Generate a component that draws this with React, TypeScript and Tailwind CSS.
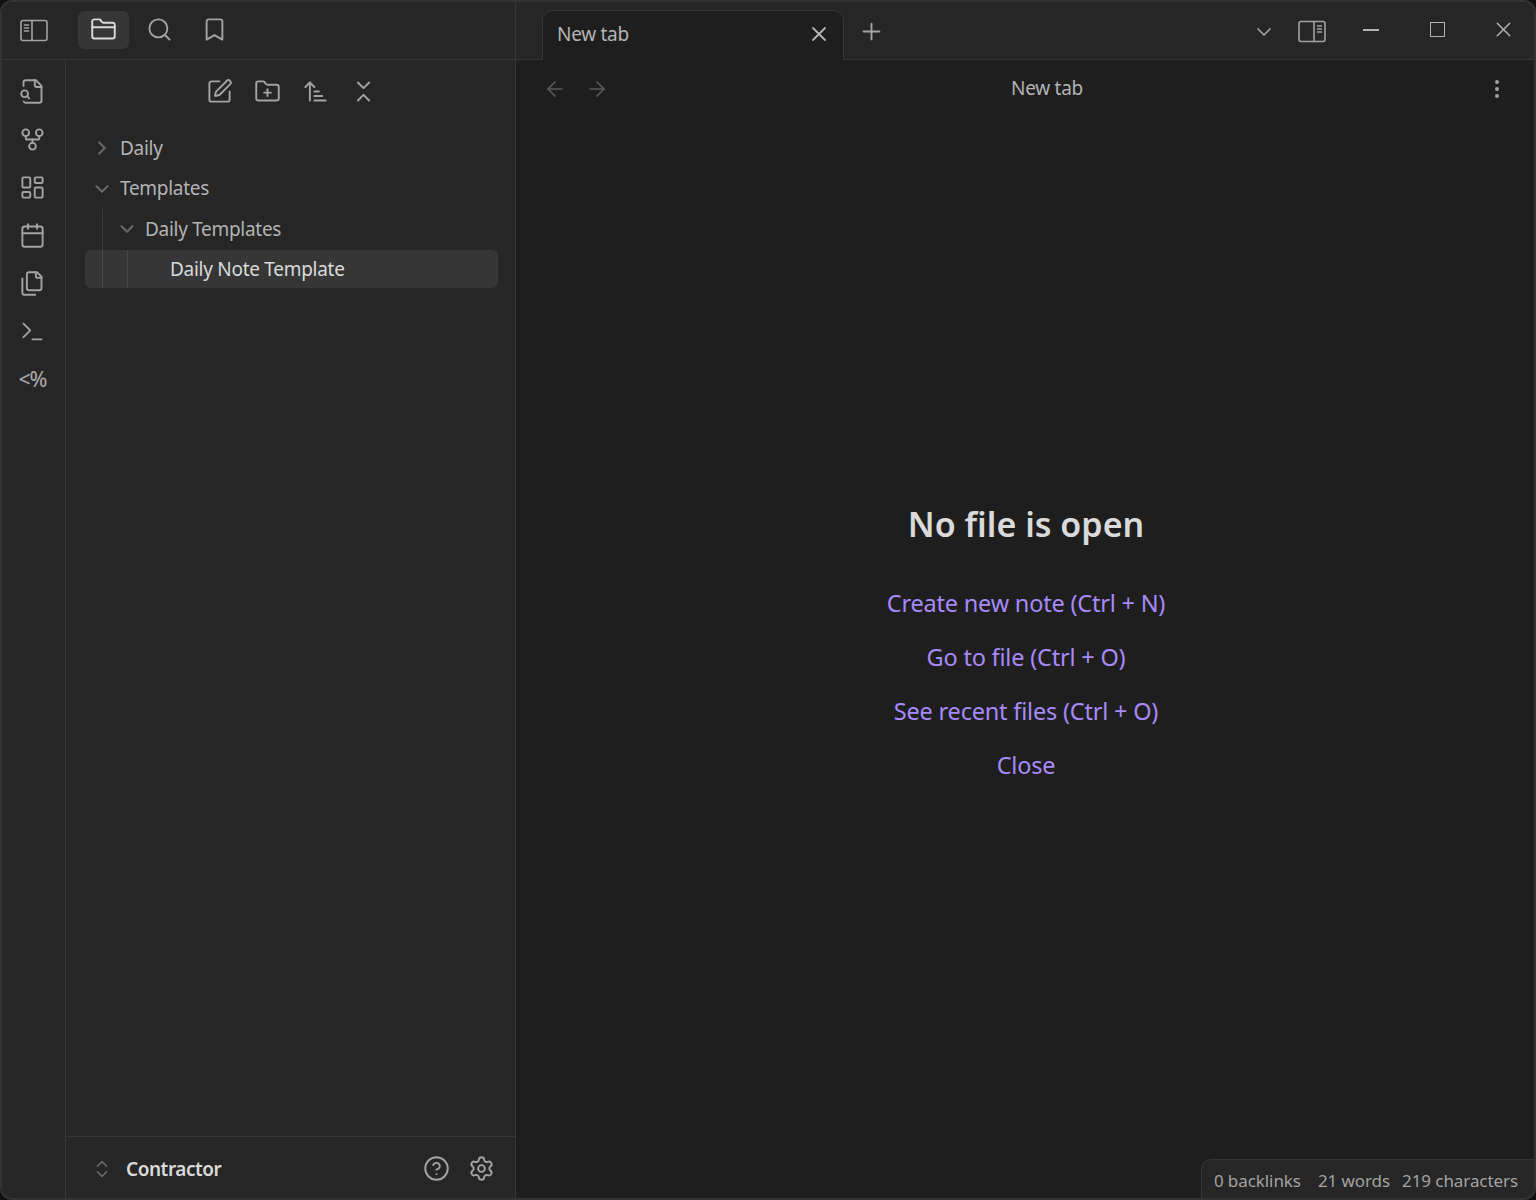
import {
	ArrowLeft,
	ArrowRight,
	ArrowUpNarrowWide,
	Bookmark,
	Calendar,
	ChevronDown,
	ChevronRight,
	ChevronsDownUp,
	ChevronsUpDown,
	CircleHelp,
	EllipsisVertical,
	FolderClosed,
	FolderPlus,
	GitFork,
	LayoutDashboard,
	Plus,
	Search,
	Settings,
	SquarePen,
	Terminal,
	X,
} from "lucide-react";

const ICON = "text-[#a3a3a3]";

function PanelIcon({ side }: { side: "left" | "right" }) {
	return (
		<svg width="30" height="24" viewBox="0 0 30 24" fill="none" stroke="currentColor" strokeWidth="1.6" strokeLinecap="round" aria-hidden="true">
			<rect x="2" y="2.5" width="26" height="20" rx="2" />
			{side === "left" ? (
				<>
					<path d="M13 2.5v20" />
					<path d="M5.5 7h4M5.5 10h4M5.5 13h4" />
				</>
			) : (
				<>
					<path d="M17 2.5v20" />
					<path d="M20.5 7h4M20.5 10h4M20.5 13h4" />
				</>
			)}
		</svg>
	);
}

function FileSearchIcon() {
	return (
		<svg width="27" height="27" viewBox="0 0 24 24" fill="none" stroke="currentColor" strokeWidth="1.7" strokeLinecap="round" strokeLinejoin="round" aria-hidden="true">
			<path d="M14 2v4a2 2 0 0 0 2 2h4" />
			<path d="M4.268 21a2 2 0 0 0 1.727 1H18a2 2 0 0 0 2-2V7l-5-5H6a2 2 0 0 0-2 2v3" />
			<path d="m9 18-1.5-1.5" />
			<circle cx="5" cy="14" r="3" />
		</svg>
	);
}

function FilesIcon() {
	return (
		<svg width="27" height="27" viewBox="0 0 24 24" fill="none" stroke="currentColor" strokeWidth="1.7" strokeLinecap="round" strokeLinejoin="round" aria-hidden="true">
			<path d="M20 7h-3a2 2 0 0 1-2-2V2" />
			<path d="M9 18a2 2 0 0 1-2-2V4a2 2 0 0 1 2-2h7l4 4v10a2 2 0 0 1-2 2Z" />
			<path d="M3 7.6v12.8A1.6 1.6 0 0 0 4.6 22h9.8" />
		</svg>
	);
}

function TreeRow({ label, depth, open }: { label: string; depth: number; open: boolean }) {
	return (
		<div className="flex h-[40.5px] items-center pl-[35px]">
			{Array.from({ length: depth }).map((_, i) => (
				<div key={i} className="ml-[1px] h-full w-[24px] border-l border-[#3a3a3a]" />
			))}
			{open ? (
				<ChevronDown size={22} strokeWidth={2.4} className="-ml-[10px] shrink-0 text-[#666666]" />
			) : (
				<ChevronRight size={22} strokeWidth={2.4} className="-ml-[10px] shrink-0 text-[#666666]" />
			)}
			<span className="ml-[7px] pb-[1px] text-[19px] tracking-[-0.3px] text-[#b3b3b3]">{label}</span>
		</div>
	);
}

export default function App() {
	return (
		<div
			className="h-[1200px] w-[1536px] overflow-hidden bg-[#111111]"
			style={{ fontFamily: "'Noto Sans', 'Liberation Sans', sans-serif" }}
		>
			<div className="relative flex h-full w-full flex-col overflow-hidden rounded-[12px] border-2 border-[#333333] bg-[#1e1e1e]">
				{/* Title bar */}
				<div className="flex h-[58px] shrink-0">
					<div className="flex w-[514px] shrink-0 items-center border-b border-r border-[#363636] bg-[#262626] pb-[2px] pl-[17px]">
						<div className={ICON}>
							<PanelIcon side="left" />
						</div>
						<div className="ml-[29px] flex h-[38px] w-[51px] items-center justify-center rounded-[6px] bg-[#363636] text-[#dadada]">
							<FolderClosed size={27} strokeWidth={1.7} />
						</div>
						<Search size={27} strokeWidth={1.7} className={`ml-[17px] ${ICON}`} />
						<Bookmark size={27} strokeWidth={1.7} className={`ml-[28px] ${ICON}`} />
					</div>
					<div className="flex flex-1 items-end bg-[#262626]">
						<div className="w-[26px] self-stretch border-b border-[#363636]" />
						<div className="flex h-[50px] w-[302px] items-center rounded-t-[10px] border border-b-0 border-[#363636] bg-[#1e1e1e] pb-[3px] pl-[14px] pr-[12px]">
							<span className="flex-1 text-[19px] tracking-[-0.28px] text-[#b3b3b3]">New tab</span>
							<X size={24} strokeWidth={1.8} className="text-[#b3b3b3]" />
						</div>
						<div className="flex flex-1 items-center self-stretch border-b border-[#363636] pl-[14px]">
							<Plus size={27} strokeWidth={1.7} className={`mt-[2px] ${ICON}`} />
							<ChevronDown size={24} strokeWidth={1.7} className={`ml-[367px] mt-[2px] ${ICON}`} />
							<div className={`ml-[21px] ${ICON}`}>
								<PanelIcon side="right" />
							</div>
							<div className="mb-[1px] ml-[36px] h-[1.5px] w-[16px] bg-[#b3b3b3]" />
							<div className="mb-[2px] ml-[51px] h-[15px] w-[15px] border-[1.5px] border-[#b3b3b3]" />
							<X size={25} strokeWidth={1.4} className="mb-[2px] ml-[46px] text-[#b3b3b3]" />
						</div>
					</div>
				</div>

				<div className="flex min-h-0 flex-1">
					{/* Ribbon */}
					<div className="flex w-[64px] shrink-0 flex-col items-center gap-[21px] border-r border-[#363636] bg-[#262626] pr-[2px] pt-[18px] text-[#a3a3a3]">
						<FileSearchIcon />
						<GitFork size={27} strokeWidth={1.7} />
						<LayoutDashboard size={27} strokeWidth={1.7} />
						<Calendar size={27} strokeWidth={1.7} />
						<FilesIcon />
						<Terminal size={27} strokeWidth={1.7} />
						<span className="h-[27px] text-[21px] font-medium leading-[27px] tracking-[-1px]">&lt;%</span>
					</div>

					{/* File explorer */}
					<div className="flex w-[450px] shrink-0 flex-col border-r border-[#363636] bg-[#262626]">
						<div className="flex h-[62px] items-center justify-center gap-[21px] pl-[2px] text-[#a3a3a3]">
							<SquarePen size={27} strokeWidth={1.7} />
							<FolderPlus size={27} strokeWidth={1.7} />
							<ArrowUpNarrowWide size={27} strokeWidth={1.7} />
							<ChevronsDownUp size={27} strokeWidth={1.7} />
						</div>
						<div className="mt-[6px] flex-1">
							<TreeRow label="Daily" depth={0} open={false} />
							<TreeRow label="Templates" depth={0} open={true} />
							<TreeRow label="Daily Templates" depth={1} open={true} />
							<div className="ml-[19px] mr-[17px] flex h-[38px] items-center rounded-[6px] bg-[#363636]">
								<div className="ml-[17px] h-full w-[25px] border-l border-[#4a4a4a]" />
								<div className="h-full w-[43px] border-l border-[#4a4a4a]" />
								<span className="pt-[1px] text-[19px] tracking-[-0.28px] text-[#dadada]">Daily Note Template</span>
							</div>
						</div>
						<div className="flex h-[62px] items-center border-t border-[#363636] pl-[25px] pr-[20px] pt-[2px]">
							<ChevronsUpDown size={22} strokeWidth={1.7} className="text-[#6b6b6b]" />
							<span className="ml-[13px] flex-1 pt-[1px] text-[19px] font-semibold tracking-[-0.45px] text-[#dadada]">Contractor</span>
							<CircleHelp size={27} strokeWidth={1.7} className="text-[#a3a3a3]" />
							<Settings size={27} strokeWidth={1.7} className="ml-[18px] text-[#a3a3a3]" />
						</div>
					</div>

					{/* Main pane */}
					<div className="flex min-w-0 flex-1 flex-col">
						<div className="flex h-[58px] items-center pl-[27px] pr-[26px] text-[#5a5a5a]">
							<ArrowLeft size={24} strokeWidth={1.7} />
							<ArrowRight size={24} strokeWidth={1.7} className="ml-[18px]" />
							<span className="flex-1 pb-[2px] text-center text-[19px] tracking-[-0.28px] text-[#b3b3b3]">New tab</span>
							<EllipsisVertical size={24} strokeWidth={2} className="mr-[-1px] text-[#a3a3a3]" />
						</div>
						<div className="flex flex-1 flex-col items-center pl-[2px] pt-[381px]">
							<h1 className="text-[34px] font-semibold leading-[50px] text-[#dadada]">No file is open</h1>
							<div className="mt-[39px] flex flex-col items-center gap-[24px] text-[23.5px] leading-[30px] tracking-[-0.2px] text-[#a68af9]">
								<span>Create new note (Ctrl + N)</span>
								<span>Go to file (Ctrl + O)</span>
								<span>See recent files (Ctrl + O)</span>
								<span>Close</span>
							</div>
						</div>
					</div>
				</div>

				{/* Status bar */}
				<div className="absolute bottom-0 right-0 flex h-[39px] items-center rounded-tl-[10px] border-l border-t border-[#363636] bg-[#262626] pl-[12px] pr-[16px] pt-[3px] text-[17px] tracking-[-0.08px] text-[#a3a3a3]">
					<span>0 backlinks</span>
					<span className="ml-[17px]">21 words</span>
					<span className="ml-[12px]">219 characters</span>
				</div>
			</div>
		</div>
	);
}
